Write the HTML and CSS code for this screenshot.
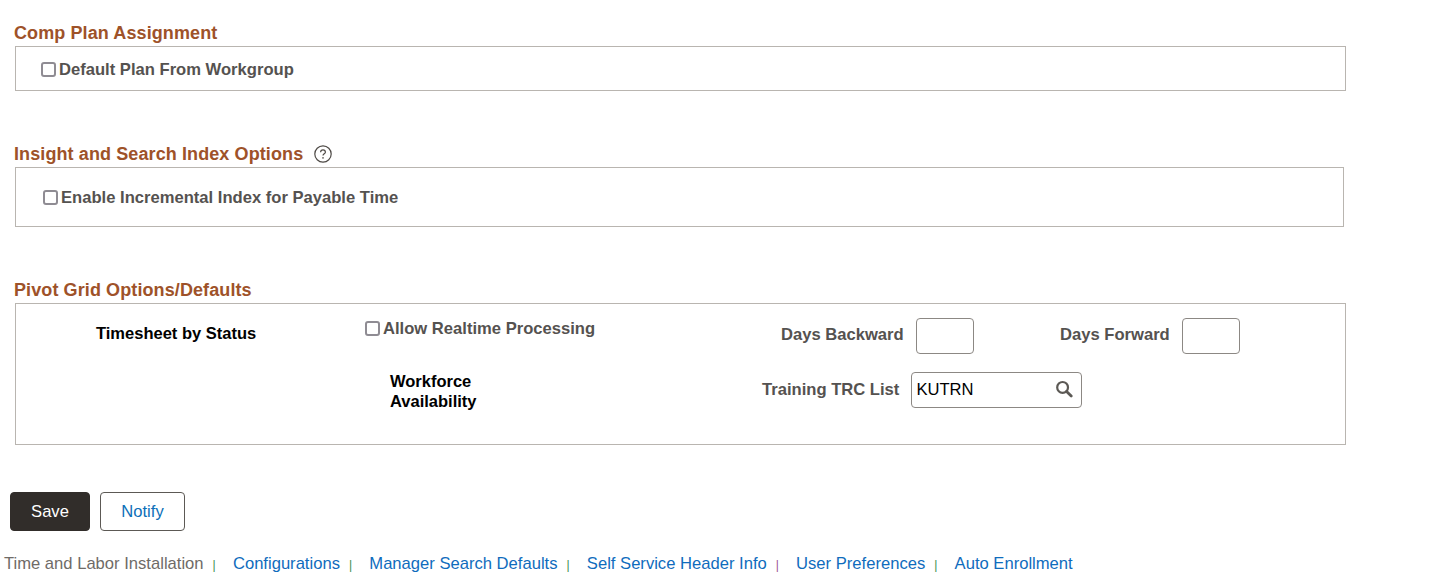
FILE: index.html
```html
<!DOCTYPE html>
<html lang="en">
<head>
<meta charset="utf-8">
<title>Time and Labor Installation</title>
<link rel="stylesheet" href="styles.css">
</head>
<body>
<main class="page">
  <section class="sec sec-comp">
    <h2 class="sec-title">Comp Plan Assignment</h2>
    <div class="panel panel-comp">
      <label class="check"><span class="box"></span><span class="check-text">Default Plan From Workgroup</span></label>
    </div>
  </section>
  <section class="sec sec-insight">
    <h2 class="sec-title">Insight and Search Index Options
      <svg class="help" width="18" height="18" viewBox="0 0 18 18" aria-hidden="true"><circle cx="9" cy="9" r="8.2" fill="none" stroke="#4f4b47" stroke-width="1.2"/><path d="M6.6 7.2a2.4 2.4 0 0 1 4.8 0c0 1.5-2.4 1.7-2.4 3.3" fill="none" stroke="#4f4b47" stroke-width="1.2"/><circle cx="9" cy="12.9" r=".8" fill="#4f4b47"/></svg>
    </h2>
    <div class="panel panel-insight">
      <label class="check"><span class="box"></span><span class="check-text">Enable Incremental Index for Payable Time</span></label>
    </div>
  </section>
  <section class="sec sec-pivot">
    <h2 class="sec-title">Pivot Grid Options/Defaults</h2>
    <div class="panel panel-pivot">
      <div class="pivot-row row-one">
        <div class="strong-label status-label">Timesheet by Status</div>
        <label class="check realtime"><span class="box"></span><span class="check-text">Allow Realtime Processing</span></label>
        <div class="field back-field"><span class="field-label">Days Backward</span><span class="input small"></span></div>
        <div class="field fwd-field"><span class="field-label">Days Forward</span><span class="input small"></span></div>
      </div>
      <div class="pivot-row row-two">
        <div class="strong-label avail-label">Workforce<br>Availability</div>
        <div class="field trc-field"><span class="field-label">Training TRC List</span>
          <span class="input lookup"><span class="value">KUTRN</span>
            <svg class="search" width="18" height="18" viewBox="0 0 18 18" aria-hidden="true"><circle cx="7.6" cy="7.4" r="5.4" fill="none" stroke="#5c5955" stroke-width="2.2"/><path d="M11.6 11.4l4.6 4.6" stroke="#5c5955" stroke-width="2.8" stroke-linecap="round"/></svg>
          </span>
        </div>
      </div>
    </div>
  </section>
  <div class="actions">
    <button class="btn btn-primary" type="button">Save</button>
    <button class="btn btn-secondary" type="button">Notify</button>
  </div>
  <nav class="links">
    <span class="current">Time and Labor Installation</span><span class="sep">|</span>
    <a href="#">Configurations</a><span class="sep">|</span>
    <a href="#">Manager Search Defaults</a><span class="sep">|</span>
    <a href="#">Self Service Header Info</a><span class="sep alt">|</span>
    <a href="#">User Preferences</a><span class="sep">|</span>
    <a href="#">Auto Enrollment</a>
  </nav>
</main>
</body>
</html>
```
FILE: styles.css
```css
* { box-sizing: border-box; }
html, body { margin: 0; padding: 0; background: #fff; }
body { font-family: "Liberation Sans", Arial, sans-serif; font-size: 16.6px; color: #555250; }
.page { height: 582px; overflow: hidden; padding-top: 24px; }
.sec { margin-left: 14px; }
.sec-title { display: flex; align-items: center; margin: 0 0 3px; height: 19px; font-size: 18px; letter-spacing: .1px; line-height: 19px; font-weight: 700; color: #9e5229; }
.help { margin-left: 11px; position: relative; top: -1px; }
.panel { margin-left: 1px; border: 1px solid #b9b5b0; background: #fff; }
.panel-comp { width: 1331px; height: 45px; padding: 14px 0 0 25px; }
.panel-insight { width: 1329px; height: 60px; padding: 21px 0 0 27px; }
.panel-pivot { width: 1331px; height: 142px; padding-top: 14px; }
.sec-insight { margin-top: 54px; }
.sec-pivot { margin-top: 54px; }
.check { display: flex; align-items: center; height: 17px; font-weight: 700; }
.box { flex: none; width: 15px; height: 15px; margin-right: 3px; border: 2px solid #8f8c93; border-radius: 3px; background: #fff; }
.check-text { white-space: nowrap; }
.pivot-row { display: flex; align-items: flex-start; }
.row-one { height: 40px; }
.row-two { height: 60px; margin-top: 14px; }
.strong-label { color: #000; font-size: 16.5px; font-weight: 700; line-height: 20px; }
.status-label { width: 269px; margin: 5px 0 0 80px; white-space: nowrap; }
.realtime { width: 413px; margin-top: 2px; }
.field { display: flex; align-items: center; font-weight: 700; }
.field-label { white-space: nowrap; position: relative; top: -1px; }
.back-field { width: 282px; padding-left: 3px; }
.back-field .field-label, .fwd-field .field-label { margin-right: 12px; }
.input { display: block; border: 1px solid #8c8884; border-radius: 4px; background: #fff; }
.small { width: 58px; height: 36px; }
.avail-label { width: 372px; margin: -1px 0 0 374px; }
.trc-field { height: 36px; }
.trc-field .field-label { margin-right: 12px; top: 0; }
.lookup { display: flex; align-items: center; justify-content: space-between; width: 171px; height: 36px; padding: 0 8px 0 4px; }
.value { color: #000; font-weight: 400; }
.search { margin-top: -2px; }
.actions { display: flex; gap: 10px; margin: 47px 0 0 10px; }
.btn { height: 39px; border-radius: 4px; font-family: inherit; font-size: 16.6px; padding: 0; }
.btn-primary { width: 80px; border: 1px solid #312d2a; background: #312d2a; color: #fff; }
.btn-secondary { width: 85px; border: 1px solid #5c5955; background: #fff; color: #0d6fb8; }
.links { display: flex; align-items: center; margin: 23px 0 0 4px; height: 20px; white-space: nowrap; }
.current { color: #6f6b67; }
.links a { color: #0f6cbd; text-decoration: none; }
.sep { font-size: 12px; color: #3b8f4f; margin: 2px 17.25px 0 9px; line-height: 14px; }
.sep.alt { color: #9a4f96; }
```
